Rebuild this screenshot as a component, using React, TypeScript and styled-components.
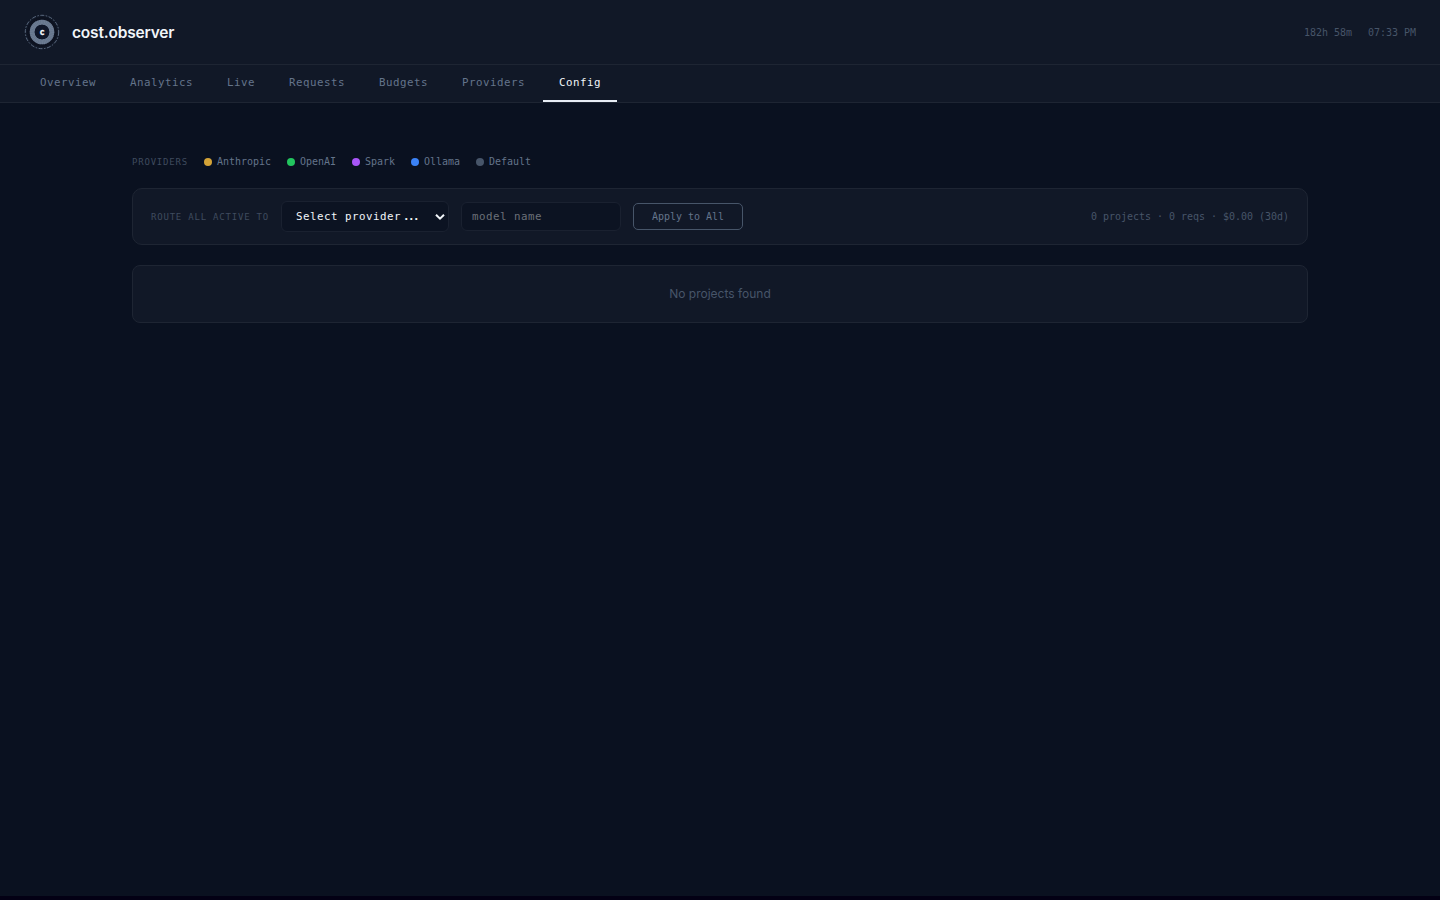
import React from "react";
import styled, { createGlobalStyle } from "styled-components";

const mono = `"DejaVu Sans Mono", "Liberation Mono", monospace`;
const sans = `Inter, "Liberation Sans", sans-serif`;

const GlobalStyle = createGlobalStyle`
  *, *::before, *::after { box-sizing: border-box; }
  html { background: #030014; }
  body { margin: 0; font-family: ${sans}; color: #e2e8f0; }
`;

const Page = styled.div`
  height: 896px;
  background: #0a1120;
`;

const Header = styled.header`
  display: flex;
  align-items: center;
  justify-content: space-between;
  height: 65px;
  padding: 0 24px;
  background: #111827;
  border-bottom: 1px solid #1e2533;
`;

const Brand = styled.div`
  display: flex;
  align-items: center;
  gap: 12px;
`;

const BrandName = styled.span`
  padding-top: 1px;
  font-size: 15.5px;
  font-weight: 600;
  letter-spacing: -0.19px;
  color: #f1f5f9;
`;

const Status = styled.div`
  display: flex;
  gap: 16px;
  padding-top: 2px;
  font: 9.97px/16px ${mono};
  color: #475569;
`;

const Nav = styled.nav`
  display: flex;
  gap: 2px;
  height: 38px;
  padding: 0 24px;
  background: #111827;
  border-bottom: 1px solid #1e2533;
`;

const Tab = styled.button<{ $active?: boolean }>`
  padding: 0 16px;
  border: 0;
  border-bottom: 2px solid ${(p) => (p.$active ? "#e8edf5" : "transparent")};
  background: none;
  font: 10.8px/35px ${mono};
  letter-spacing: 0.498px;
  color: ${(p) => (p.$active ? "#f1f5f9" : "#64748b")};
`;

const Main = styled.main`
  width: 1176px;
  margin: 0 auto;
  padding-top: 53px;
`;

const Legend = styled.div`
  display: flex;
  align-items: center;
  gap: 16px;
  height: 12px;
  margin-bottom: 20px;
`;

const Caption = styled.span`
  font: 9px/12px ${mono};
  letter-spacing: 0.79px;
  text-transform: uppercase;
  white-space: nowrap;
  color: #3f4b5e;
`;

const LegendItem = styled.span`
  display: flex;
  align-items: center;
  gap: 5px;
  font: 9.97px/12px ${mono};
  color: #64748b;
`;

const Dot = styled.i<{ $color: string }>`
  width: 8px;
  height: 8px;
  border-radius: 50%;
  background: ${(p) => p.$color};
`;

const Panel = styled.section`
  display: flex;
  align-items: center;
  background: #111827;
  border: 1px solid #1e2533;
`;

const RoutePanel = styled(Panel)`
  gap: 12px;
  height: 57px;
  padding: 0 18px;
  margin-bottom: 20px;
  border-radius: 10px;
`;

const EmptyPanel = styled(Panel)`
  justify-content: center;
  height: 58px;
  padding-bottom: 2px;
  border-radius: 8px;
  font-size: 12px;
  color: #475569;
`;

const ProviderSelect = styled.button`
  display: flex;
  align-items: center;
  width: 168px;
  height: 31px;
  padding: 0 3px 0 14px;
  border: 1px solid #1a2130;
  border-radius: 6px;
  background: #0c1322;
  font: 10.8px/29px ${mono};
  letter-spacing: 0.498px;
  color: #f1f5f9;
`;

const Ellipsis = styled.span`
  margin-left: 2px;
  font-weight: 700;
  letter-spacing: -1.5px;
`;

const Chevron = styled.svg`
  margin-left: auto;
`;

const ModelInput = styled.input`
  width: 160px;
  height: 29px;
  padding: 0 10px;
  border: 1px solid #1a2130;
  border-radius: 6px;
  background: #0c1322;
  font: 10.8px ${mono};
  letter-spacing: 0.498px;
  color: #f1f5f9;
  &::placeholder { color: #6b7078; opacity: 1; }
`;

const ApplyButton = styled.button`
  width: 110px;
  height: 27px;
  padding: 0;
  border: 1px solid #475569;
  border-radius: 5px;
  background: none;
  font: 9.97px/25px ${mono};
  color: #64748b;
`;

const Summary = styled.span`
  margin-left: auto;
  font: 9.97px/12px ${mono};
  color: #475569;
`;

function Logo() {
  return (
    <svg width="36" height="36" viewBox="0 0 36 36" fill="none">
      <circle cx="18" cy="18" r="15" fill="#0d1220" />
      <circle cx="18" cy="18" r="16.7" stroke="#64748b" strokeWidth="0.9" strokeDasharray="4 1.5 1.5 1.5" />
      <circle cx="18" cy="18" r="9.8" stroke="#64748b" strokeWidth="5" />
      <circle cx="18" cy="18" r="9.8" stroke="#7b899f" strokeWidth="5" strokeDasharray="0.8 0.8" opacity="0.5" />
      <circle cx="18" cy="18" r="7.3" fill="#0f1629" />
      <text x="18" y="20.5" textAnchor="middle" fontFamily="DejaVu Sans Mono, monospace" fontSize="8.5" fontWeight="700" fill="#f8fafc" stroke="#f8fafc" strokeWidth="0.3">c</text>
    </svg>
  );
}

const tabs = ["Overview", "Analytics", "Live", "Requests", "Budgets", "Providers", "Config"];

const providers = [
  { name: "Anthropic", color: "#d4a337" },
  { name: "OpenAI", color: "#22c55e" },
  { name: "Spark", color: "#a855f7" },
  { name: "Ollama", color: "#3b82f6" },
  { name: "Default", color: "#475569" },
];

export default function App() {
  return (
    <Page>
      <GlobalStyle />
      <Header>
        <Brand>
          <Logo />
          <BrandName>cost.observer</BrandName>
        </Brand>
        <Status>
          <span>182h 58m</span>
          <span>07:33 PM</span>
        </Status>
      </Header>
      <Nav>
        {tabs.map((tab) => (
          <Tab key={tab} $active={tab === "Config"}>{tab}</Tab>
        ))}
      </Nav>
      <Main>
        <Legend>
          <Caption>Providers</Caption>
          {providers.map((p) => (
            <LegendItem key={p.name}>
              <Dot $color={p.color} />
              {p.name}
            </LegendItem>
          ))}
        </Legend>
        <RoutePanel>
          <Caption>Route all active to</Caption>
          <ProviderSelect>
            <span>Select provider</span>
            <Ellipsis>...</Ellipsis>
            <Chevron width="10" height="8" viewBox="0 0 10 8" fill="none">
              <path d="M1 1.7 5 5.7 9 1.7" stroke="#f1f5f9" strokeWidth="2" />
            </Chevron>
          </ProviderSelect>
          <ModelInput placeholder="model name" />
          <ApplyButton>Apply to All</ApplyButton>
          <Summary>0 projects · 0 reqs · $0.00 (30d)</Summary>
        </RoutePanel>
        <EmptyPanel>No projects found</EmptyPanel>
      </Main>
    </Page>
  );
}
